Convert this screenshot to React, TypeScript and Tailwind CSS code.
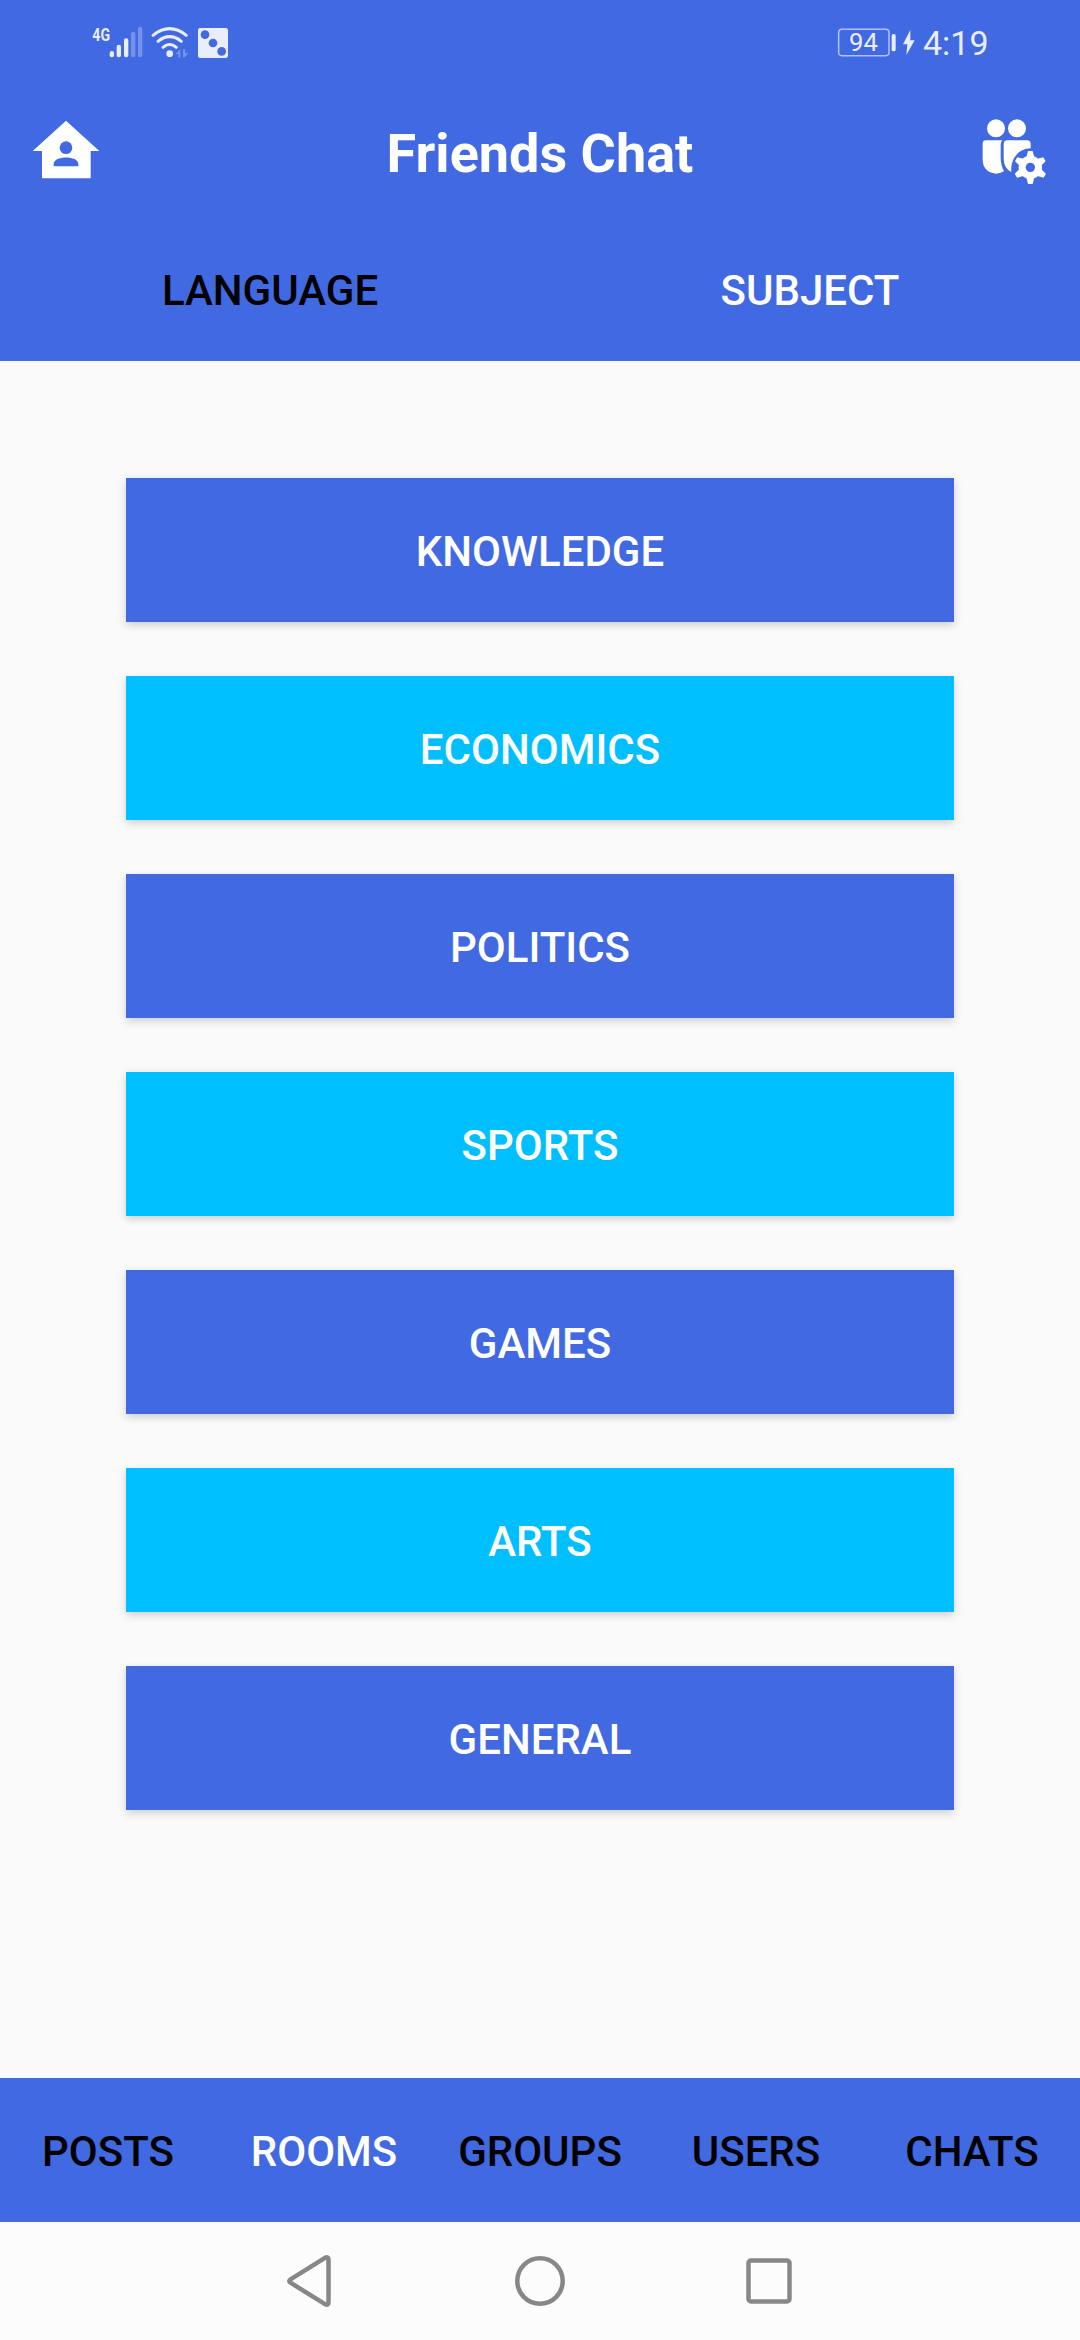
const rooms = [
  { name: "KNOWLEDGE", color: "bg-[#4169e1]" },
  { name: "ECONOMICS", color: "bg-[#00bfff]" },
  { name: "POLITICS", color: "bg-[#4169e1]" },
  { name: "SPORTS", color: "bg-[#00bfff]" },
  { name: "GAMES", color: "bg-[#4169e1]" },
  { name: "ARTS", color: "bg-[#00bfff]" },
  { name: "GENERAL", color: "bg-[#4169e1]" },
];

const navItems = ["POSTS", "ROOMS", "GROUPS", "USERS", "CHATS"];

function StatusBar() {
  return (
    <div className="flex h-[90px] items-start justify-between pl-20 pr-[70px] pt-[10px]">
      {/* Signal, wifi, game */}
      <svg width="160" height="60" viewBox="0 0 480 180" fill="#e9edfc">
        {/* squeezed sideways, the network label is condensed */}
        <text
          transform="translate(37 92) scale(0.74 1)"
          fontSize="57"
          fontWeight="700"
          fontFamily="Roboto, sans-serif"
        >
          4G
        </text>
        <rect x="89" y="123" width="13" height="19" rx="6" />
        <rect x="110" y="104" width="13" height="38" rx="6" />
        <rect x="132" y="85" width="13" height="57" rx="6" />
        <rect x="153" y="66" width="13" height="76" rx="6" fill="#7591ec" />
        <rect x="174" y="50" width="13" height="92" rx="6" fill="#7591ec" />
        <g fill="none" stroke="#e9edfc" strokeWidth="9" strokeLinecap="round">
          <path d="M219 76Q269 36 319 76" />
          <path d="M234 94Q269 66 304 94" />
          <path d="M249 112Q269 95 289 112" />
        </g>
        <circle cx="269" cy="131" r="10" />
        <path d="M288 130l13-12v25h-6v-11h-7zM309 118h6v10h10l-10 14h-6z" fill="#7591ec" />
        <rect x="354" y="54" width="90" height="90" rx="7" />
        <g fill="#4169e1">
          <circle cx="375" cy="74" r="13" />
          <circle cx="399" cy="99" r="13" />
          <circle cx="425" cy="124" r="13" />
        </g>
      </svg>

      {/* Battery and clock */}
      <svg width="190" height="60" viewBox="0 0 570 180" fill="#e9edfc">
        <rect x="56" y="58" width="151" height="79" rx="10" fill="none" stroke="#b3c2f4" strokeWidth="4.5" />
        <rect x="215" y="72" width="12" height="52" rx="5" />
        <path d="M271 60L249 103H262L259 135L284 91H271Z" />
        <text x="87" y="123" fontSize="77" fontWeight="400" fontFamily="Roboto, sans-serif">
          94
        </text>
        <text x="309" y="135" fontSize="102" fontWeight="400" fontFamily="Roboto, sans-serif">
          4:19
        </text>
      </svg>
    </div>
  );
}

function HomeIcon() {
  return (
    <svg width="100" height="107" viewBox="0 0 300 321">
      <path d="M138 62L238 153H212V235H66V153H38Z" fill="#fff" />
      <circle cx="138" cy="143" r="19" fill="#4169e1" />
      <path d="M101 199V192C101 166 175 166 175 192V199Z" fill="#4169e1" />
    </svg>
  );
}

function GroupSettingsIcon() {
  return (
    <svg width="100" height="107" viewBox="0 0 300 321" fill="#fff">
      <circle cx="108" cy="85" r="27" />
      <circle cx="171" cy="85" r="27" />
      <path d="M78 121H127Q122 126 122 134V172Q122 196 132 214Q120 221 108 221Q68 217 68 178V131Q68 121 78 121Z" />
      <path d="M142 121H201Q212 121 212 132V145C176 146 151 175 154 216Q131 204 131 176V132Q131 121 142 121Z" />
      {/* Gear */}
      <circle cx="211" cy="202" r="35" />
      <path d="M204 153H218L224 176H198L204 153ZM204 252H218L224 228H198Z" />
      <path d="M204 153H218L224 176H198L204 153ZM204 252H218L224 228H198Z" transform="rotate(60 211 202)" />
      <path d="M204 153H218L224 176H198L204 153ZM204 252H218L224 228H198Z" transform="rotate(-60 211 202)" />
      <circle cx="211" cy="202" r="14" fill="#4169e1" />
    </svg>
  );
}

export default function App() {
  return (
    <main className="flex h-[2340px] w-[1080px] flex-col bg-[#fafafa] font-['Roboto',sans-serif] text-[42px] font-medium leading-none">
      <header className="h-[361px] bg-[#4169e1]">
        <StatusBar />

        {/* Title */}
        <div className="flex h-[127px] items-center justify-between px-5">
          <HomeIcon />
          <h1 className="text-[54px] font-bold text-white">Friends Chat</h1>
          <GroupSettingsIcon />
        </div>

        {/* Tabs */}
        <div className="grid h-36 grid-cols-2">
          <button className="pt-[3px] text-black">LANGUAGE</button>
          <button className="pt-[3px] text-white">SUBJECT</button>
        </div>
      </header>

      {/* Rooms */}
      <section className="flex flex-1 flex-col gap-[54px] px-[126px] pt-[117px]">
        {rooms.map((room) => (
          <button
            key={room.name}
            className={`h-36 pt-[3px] text-white shadow-[0_3px_8px_rgba(0,0,0,0.18)] ${room.color}`}
          >
            {room.name}
          </button>
        ))}
      </section>

      {/* Bottom nav */}
      <nav className="grid h-36 grid-cols-5 bg-[#4169e1]">
        {navItems.map((item) => (
          <button key={item} className={`pt-[3px] ${item === "ROOMS" ? "text-white" : "text-black"}`}>
            {item}
          </button>
        ))}
      </nav>

      {/* System buttons */}
      <div className="flex h-[118px] items-center justify-center gap-[169px] bg-[#fcfcfc]">
        <svg width="60" height="60" viewBox="0 0 60 60" fill="none" stroke="#878787" strokeWidth="4.5" strokeLinejoin="round">
          <path d="M9.5 28.3L44 6.8Q47.5 5.2 47.5 8.5V51.5Q47.5 54.8 44 53.2L9.5 31.7Q7 30 9.5 28.3Z" />
        </svg>
        <svg width="60" height="60" viewBox="0 0 60 60" fill="none" stroke="#878787" strokeWidth="4.5">
          <circle cx="30" cy="30" r="22.7" />
        </svg>
        <svg width="60" height="60" viewBox="0 0 60 60" fill="none" stroke="#878787" strokeWidth="4.5">
          <rect x="9.5" y="9.5" width="41" height="41" rx="2.5" />
        </svg>
      </div>
    </main>
  );
}
